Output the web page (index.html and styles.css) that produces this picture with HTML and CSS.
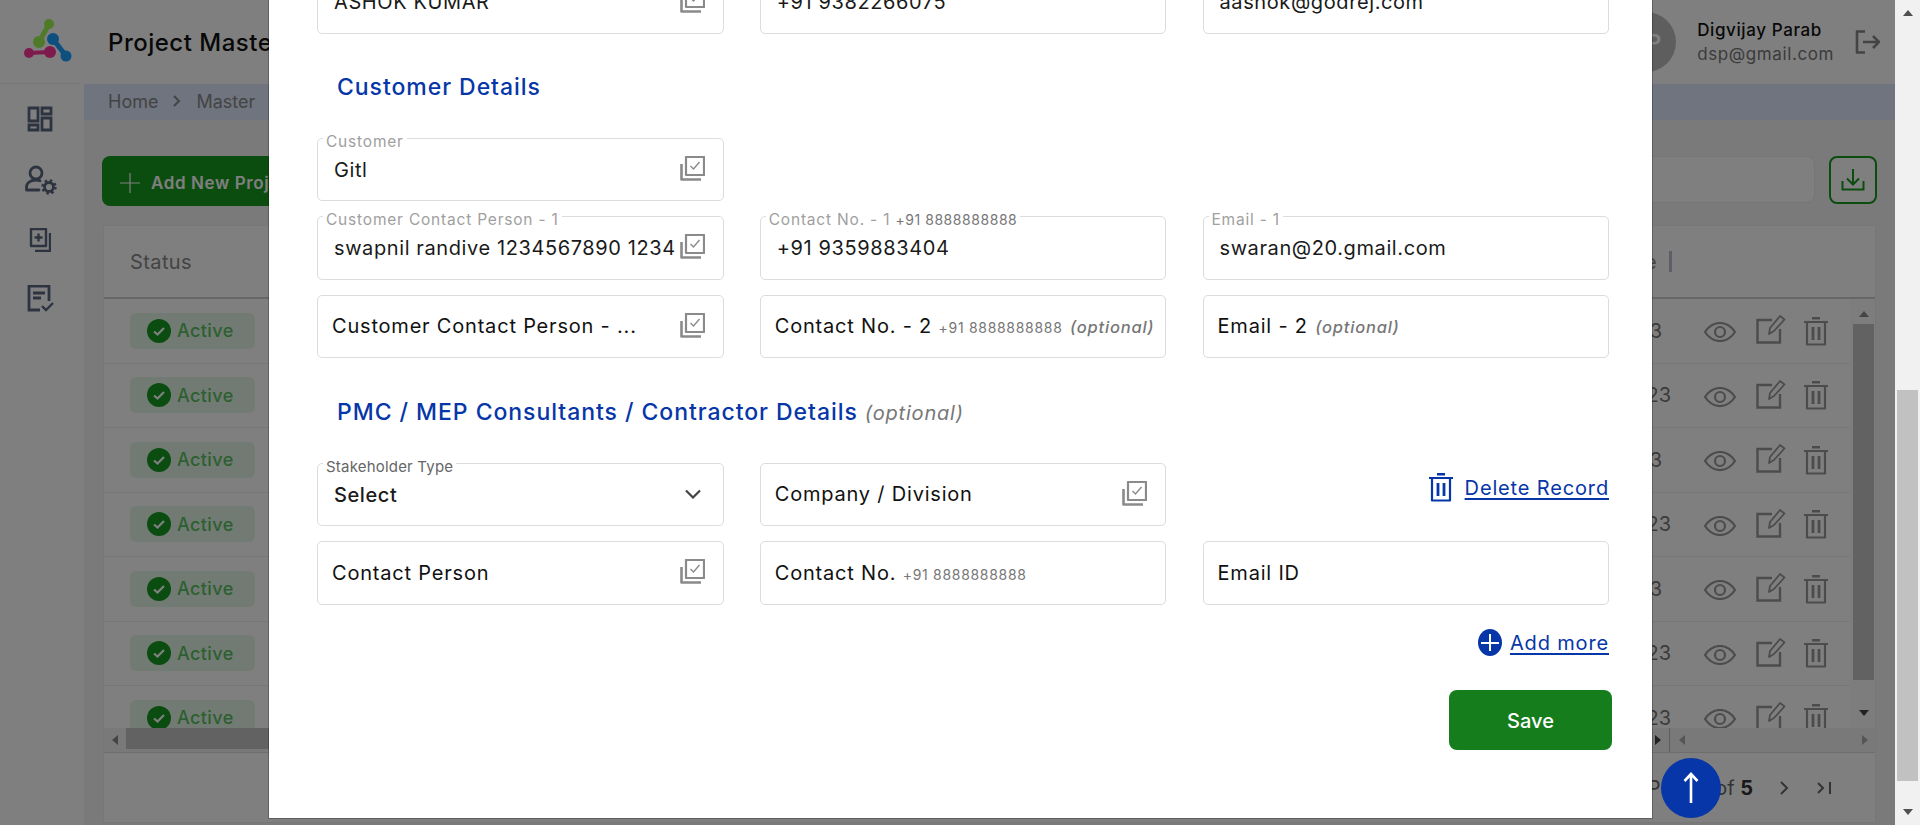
FILE: index.html
```html
<!DOCTYPE html>
<html lang="en">

<head>
  <meta charset="UTF-8">
  <meta name="viewport" content="width=device-width, initial-scale=1.0">
  <title>Project Master</title>
  <link rel="stylesheet" href="styles.css">
</head>

<body>
  <svg class="defs" width="0" height="0">
    <symbol id="i-copy" viewBox="0 0 25 25">
      <path d="M6 1h18v18H6z" fill="none" stroke="currentColor" stroke-width="2.200" stroke-linejoin="round" />
      <path d="M1.500 8v15.500H21" fill="none" stroke="currentColor" stroke-width="2.600" stroke-linejoin="round" />
      <path d="M10.500 10l3 3 6-7" fill="none" stroke="currentColor" stroke-width="1.400" />
    </symbol>
    <symbol id="i-eye" viewBox="0 0 32 20">
      <path d="M1 10C5 4 10 1 16 1s11 3 15 9c-4 6-9 9-15 9S5 16 1 10z" fill="none" stroke="currentColor" stroke-width="2.200" />
      <circle cx="16" cy="10" r="5" fill="none" stroke="currentColor" stroke-width="2.200" />
    </symbol>
    <symbol id="i-edit" viewBox="0 0 30 30">
      <path d="M16 6H1.500v22.500H24V15" fill="none" stroke="currentColor" stroke-width="2.400" />
      <path d="M13 20l1-6L24 2l4.500 3.500L18 17z" fill="none" stroke="currentColor" stroke-width="1.800" stroke-linejoin="round" />
    </symbol>
    <symbol id="i-trash" viewBox="0 0 24 30">
      <path d="M8 1h8v2.500H8zM0 5h24v2H0z" fill="currentColor" />
      <path d="M3 7v21.500h18V7" fill="none" stroke="currentColor" stroke-width="2.200" stroke-linejoin="round" />
      <path d="M9 11v13M15 11v13" fill="none" stroke="currentColor" stroke-width="2.800" />
    </symbol>
    <symbol id="i-check" viewBox="0 0 24 24">
      <circle cx="12" cy="12" r="12" fill="currentColor" />
      <path d="M7 12.500l3.500 3 6.500-6.500" fill="none" stroke="#fff" stroke-width="2.200" />
    </symbol>
  </svg>

  <div class="app">
    <aside class="sidebar">
      <div class="logo">
        <svg width="48" height="44" viewBox="0 0 48 44">
          <path d="M25 5L15 23" stroke="#9ef450" stroke-width="5" />
          <path d="M29 20l13 17" stroke="#1a9eff" stroke-width="5" />
          <path d="M5 34l21-1" stroke="#ff3499" stroke-width="4" />
          <circle cx="25" cy="5" r="5" fill="#9ef450" />
          <circle cx="15" cy="23" r="6" fill="#9ef450" />
          <circle cx="29" cy="20" r="6" fill="#1a9eff" />
          <circle cx="42" cy="37" r="5.500" fill="#1a9eff" />
          <circle cx="5" cy="34" r="5" fill="#ff3499" />
          <circle cx="26" cy="33" r="6" fill="#ff3499" />
        </svg>
      </div>
      <nav class="side-nav">
        <svg width="26" height="26" viewBox="0 0 26 26">
          <path d="M2 2h9v13H2zM15 2h9v6h-9zM2 19h9v5H2zM15 12h9v12h-9z" fill="none" stroke="currentColor" stroke-width="2.800" />
        </svg>
        <svg class="nav-user" width="32" height="30" viewBox="0 0 32 30">
          <circle cx="11" cy="8" r="6" fill="none" stroke="currentColor" stroke-width="2.800" />
          <path d="M1.500 25v-3c0-4 4-7 9.500-7 2 0 3 .3 4 .7M1.500 25H14" fill="none" stroke="currentColor" stroke-width="2.800" stroke-linecap="round" />
          <circle cx="24" cy="22" r="4.500" fill="none" stroke="currentColor" stroke-width="2.800" />
          <circle cx="24" cy="22" r="6.500" fill="none" stroke="currentColor" stroke-width="2.400" stroke-dasharray="2.500 2.600" />
        </svg>
        <svg width="22" height="24" viewBox="0 0 22 24">
          <path d="M2 1h15v17H2z" fill="none" stroke="currentColor" stroke-width="2.400" stroke-linejoin="round" />
          <path d="M21 5v18H6" fill="none" stroke="currentColor" stroke-width="2.400" />
          <path d="M9.500 5.500v8M5.500 9.500h8" stroke="currentColor" stroke-width="2.400" />
        </svg>
        <svg width="27" height="27" viewBox="0 0 27 27">
          <path d="M13 25H2V1h20v15" fill="none" stroke="currentColor" stroke-width="2.800" />
          <path d="M6 8h12M6 13h8" stroke="currentColor" stroke-width="2.800" />
          <path d="M15 21l4 4 7-7" fill="none" stroke="currentColor" stroke-width="2.400" />
        </svg>
      </nav>
    </aside>

    <main class="main">
      <header class="topbar">
        <h1>Project Master</h1>
        <div class="user">
          <div class="avatar">DP</div>
          <div class="user-text">
            <div class="user-name">Digvijay Parab</div>
            <div class="user-mail">dsp@gmail.com</div>
          </div>
          <svg width="25" height="24" viewBox="0 0 25 24">
            <path d="M10 1.500H2v21h8" fill="none" stroke="currentColor" stroke-width="2.600" stroke-linejoin="round" />
            <path d="M8 12h16M18 6l6 6-6 6" fill="none" stroke="currentColor" stroke-width="2.600" />
          </svg>
        </div>
      </header>
      <div class="crumbs">Home
        <svg width="10" height="12" viewBox="0 0 10 12">
          <path d="M2 1l5 5-5 5" fill="none" stroke="currentColor" stroke-width="2" />
        </svg>
        Master
      </div>

      <section class="content">
        <div class="toolbar">
          <button class="add-btn">
            <svg width="22" height="22" viewBox="0 0 22 22">
              <path d="M11 1v20M1 11h20" stroke="currentColor" stroke-width="1.200" />
            </svg>
            Add New Project
          </button>
          <div class="search"></div>
          <button class="export">
            <svg width="24" height="24" viewBox="0 0 24 24">
              <path d="M12 1v15M6 10.500l6 6 6-6" fill="none" stroke="currentColor" stroke-width="2" />
              <path d="M1.500 13v8.500h21V13" fill="none" stroke="currentColor" stroke-width="2" />
            </svg>
          </button>
        </div>

        <div class="table">
          <div class="table-head">
            <span>Status</span>
            <span class="last-col">Date<i class="col-sep"></i></span>
          </div>
          <div class="table-body">
            <div class="rows" id="rows"></div>
            <div class="vscroll">
              <i class="arr arr-up"></i>
              <div class="vscroll-thumb"></div>
              <i class="arr arr-down"></i>
            </div>
          </div>
          <div class="hscroll">
            <div class="hscroll-main">
              <i class="arr arr-left"></i>
              <div class="hscroll-thumb"></div>
              <i class="arr arr-right"></i>
            </div>
            <div class="hscroll-side">
              <i class="arr arr-left muted"></i>
              <i class="arr arr-right muted"></i>
            </div>
          </div>
          <div class="pager">
            <span>Page 1 of <b>5</b></span>
            <svg width="12" height="16" viewBox="0 0 12 16">
              <path d="M2 2l6 6-6 6" fill="none" stroke="currentColor" stroke-width="2" />
            </svg>
            <svg width="16" height="14" viewBox="0 0 16 14">
              <path d="M1 2l5 5-5 5M13 1v12" fill="none" stroke="currentColor" stroke-width="2" />
            </svg>
          </div>
        </div>
      </section>
    </main>

    <div class="overlay"></div>

    <div class="modal">
      <div class="grid first-row">
        <div class="field">
          <span class="value">ASHOK KUMAR</span>
          <svg class="copy"><use href="#i-copy" /></svg>
        </div>
        <div class="field"><span class="value">+91 9382266075</span></div>
        <div class="field"><span class="value">aashok@godrej.com</span></div>
      </div>

      <h2 class="sec-title">Customer Details</h2>

      <div class="grid">
        <div class="field">
          <label class="float">Customer</label>
          <span class="value">Gitl</span>
          <svg class="copy"><use href="#i-copy" /></svg>
        </div>
        <div></div>
        <div></div>
        <div class="field">
          <label class="float">Customer Contact Person - 1</label>
          <span class="value">swapnil randive 1234567890 1234</span>
          <svg class="copy"><use href="#i-copy" /></svg>
        </div>
        <div class="field">
          <label class="float">Contact No. - 1 <small class="hint-dark">+91 8888888888</small></label>
          <span class="value">+91 9359883404</span>
        </div>
        <div class="field">
          <label class="float">Email - 1</label>
          <span class="value">swaran@20.gmail.com</span>
        </div>
        <div class="field">
          <span class="holder">Customer Contact Person - ...</span>
          <svg class="copy"><use href="#i-copy" /></svg>
        </div>
        <div class="field">
          <span class="holder">Contact No. - 2 <small>+91 8888888888</small> <em>(optional)</em></span>
        </div>
        <div class="field">
          <span class="holder">Email - 2 <em>(optional)</em></span>
        </div>
      </div>

      <h2 class="sec-title sec-pmc">PMC / MEP Consultants / Contractor Details <em>(optional)</em></h2>

      <div class="grid">
        <div class="field">
          <label class="float float-dark">Stakeholder Type</label>
          <span class="value value-select">Select</span>
          <svg class="chevron" width="18" height="10" viewBox="0 0 18 10">
            <path d="M2 1.500l7 7 7-7" fill="none" stroke="currentColor" stroke-width="2.200" />
          </svg>
        </div>
        <div class="field">
          <span class="holder">Company / Division</span>
          <svg class="copy"><use href="#i-copy" /></svg>
        </div>
        <div class="delete-cell">
          <svg class="del-icon" width="24" height="30"><use href="#i-trash" /></svg>
          <a href="#" class="link">Delete Record</a>
        </div>
        <div class="field">
          <span class="holder">Contact Person</span>
          <svg class="copy"><use href="#i-copy" /></svg>
        </div>
        <div class="field">
          <span class="holder">Contact No. <small>+91 8888888888</small></span>
        </div>
        <div class="field">
          <span class="holder">Email ID</span>
        </div>
      </div>

      <div class="add-row">
        <span class="add-dot"></span>
        <a href="#" class="link">Add more</a>
      </div>
      <div class="save-row">
        <button class="save">Save</button>
      </div>
    </div>

    <button class="to-top">
      <svg width="16" height="32" viewBox="0 0 16 32">
        <path d="M8 31V2M1.500 9L8 2l6.500 7" fill="none" stroke="#fff" stroke-width="2.600" />
      </svg>
    </button>
  </div>

  <div class="page-scroll">
    <i class="arr arr-up"></i>
    <div class="page-scroll-track">
      <div class="page-scroll-thumb"></div>
    </div>
    <i class="arr arr-down"></i>
  </div>

  <script>
    const rows = document.getElementById('rows');
    const years = ['3', '23', '3', '23', '3', '23', '23'];

    years.forEach((y) => {
      const row = document.createElement('div');
      row.className = 'row';
      row.innerHTML = `
        <span class="badge"><svg width="24" height="24"><use href="#i-check" /></svg>Active</span>
        <span class="date ${y === '3' ? 'date-short' : ''}">${y}</span>
        <span class="actions">
          <svg class="a-eye"><use href="#i-eye" /></svg>
          <svg class="a-edit"><use href="#i-edit" /></svg>
          <svg class="a-trash"><use href="#i-trash" /></svg>
        </span>`;
      rows.appendChild(row);
    });
  </script>
</body>

</html>
```

FILE: styles.css
```css
* {
  box-sizing: border-box;
  margin: 0;
  padding: 0;
}
html, body {
  height: 825px;
  overflow: hidden;
}
body {
  display: flex;
  font-family: Inter, "Noto Sans", sans-serif;
  color: #111;
  background: #fff;
}
.defs {
  position: absolute;
}
.app {
  position: relative;
  flex: 1;
  display: flex;
  height: 825px;
  overflow: hidden;
}

/* page behind the modal */
.sidebar {
  width: 84px;
  flex: none;
  background: #fff;
  box-shadow: 1px 0 4px rgba(0, 0, 0, .06);
}
.logo {
  height: 84px;
  margin-right: 4px;
  padding: 19px 0 0 24px;
  border-bottom: 1px solid #f0f0f0;
}
.side-nav {
  display: flex;
  flex-direction: column;
  align-items: center;
  color: #5a6880;
  margin-right: 4px;
  padding-top: 22px;
  gap: 33px;
}
.nav-user {
  margin-left: 2px;
}
.main {
  flex: 1;
  min-width: 0;
  background: #f4f4f4;
}
.topbar {
  height: 84px;
  background: #fff;
  display: flex;
  align-items: center;
  justify-content: space-between;
  padding: 0 15px 0 24px;
}
.topbar h1 {
  font-size: 24px;
  font-weight: 500;
  letter-spacing: .5px;
}
.user {
  display: flex;
  align-items: center;
  color: #888;
}
.avatar {
  width: 60px;
  height: 60px;
  border-radius: 50%;
  background: #bdbdbd;
  color: #fff;
  font-size: 22px;
  font-weight: 600;
  text-align: center;
  line-height: 60px;
  margin-right: 21px;
}
.user-text {
  margin-right: 21px;
}
.user-name {
  font-size: 17px;
  font-weight: 500;
  color: #111;
  line-height: 24px;
  letter-spacing: .6px;
}
.user-mail {
  font-size: 17px;
  line-height: 24px;
  color: #777;
  letter-spacing: .6px;
}
.crumbs {
  height: 36px;
  background: #dfe8ff;
  display: flex;
  align-items: center;
  gap: 14px;
  padding: 0 0 2px 24px;
  font-size: 18px;
  color: #888;
}
.content {
  padding: 36px 19px 0;
}
.toolbar {
  height: 50px;
  display: flex;
  justify-content: space-between;
  align-items: flex-start;
  gap: 14px;
}
.add-btn {
  width: 260px;
  height: 50px;
  margin-left: -1px;
  background: #16991f;
  border: 0;
  border-radius: 8px;
  color: #fff;
  font: 600 17px Inter, sans-serif;
  letter-spacing: .6px;
  padding: 3px 0 0 17px;
  white-space: nowrap;
  display: flex;
  align-items: center;
  gap: 10px;
}
.search {
  margin-left: auto;
  width: 500px;
  height: 47px;
  border: 1px solid #ececec;
  border-radius: 8px;
  background: #fff;
}
.export {
  width: 48px;
  height: 48px;
  margin-right: -1px;
  background: #fff;
  border: 2px solid #16991f;
  border-radius: 8px;
  color: #16991f;
  padding-top: 3px;
}
.table {
  margin-top: 19px;
  height: 598px;
  background: #fff;
  border: 1px solid #eee;
}
.table-head {
  height: 73px;
  display: flex;
  align-items: center;
  justify-content: space-between;
  padding: 0 203px 0 26px;
  font-size: 20px;
  letter-spacing: .4px;
  color: #888;
  border-bottom: 2px solid #cfcfcf;
}
.col-sep {
  display: inline-block;
  width: 3px;
  height: 21px;
  margin-left: 12px;
  vertical-align: -3px;
  background: #b9c0cc;
}
.table-body {
  height: 429px;
  display: flex;
}
.rows {
  flex: 1;
  overflow: hidden;
}
.row {
  height: 64.500px;
  display: flex;
  align-items: center;
  padding: 0 22px 0 26px;
  border-bottom: 1px solid #efefef;
}
.badge {
  width: 125px;
  height: 36px;
  background: #e4f7e6;
  border-radius: 6px;
  display: flex;
  align-items: center;
  gap: 6px;
  padding-left: 17px;
  font-size: 18px;
  letter-spacing: .4px;
  font-weight: 500;
  color: #58c062;
}
.badge svg {
  color: #169a20;
}
.date {
  margin-left: auto;
  width: 40px;
  font-size: 20px;
  color: #777;
  text-align: right;
}
.date-short {
  padding-right: 9px;
}
.actions {
  display: flex;
  align-items: center;
  margin-left: 33px;
  color: #999;
}
.a-eye {
  width: 32px;
  height: 20px;
  margin-right: 20px;
  margin-top: 3px;
}
.a-edit {
  width: 30px;
  height: 30px;
  margin-right: 18px;
  margin-top: -3px;
}
.a-trash {
  width: 24px;
  height: 30px;
}
.vscroll {
  width: 25px;
  flex: none;
  background: #fafafa;
  padding: 0 0 0 2px;
  display: flex;
  flex-direction: column;
  align-items: center;
}
.vscroll-thumb {
  width: 21px;
  height: 356px;
  margin-top: 7px;
  background: #c4c4c4;
}
.vscroll .arr-up {
  margin-top: 12px;
}
.vscroll .arr-down {
  margin-top: 30px;
}
.hscroll {
  height: 25px;
  display: flex;
  background: #f3f3f3;
  border-bottom: 1px solid #ddd;
}
.hscroll-main {
  flex: 1;
  display: flex;
  align-items: center;
  padding: 0 8px;
  border-right: 1px solid #bbb;
}
.hscroll-thumb {
  flex: 1;
  height: 21px;
  align-self: flex-start;
  margin: 0 300px 0 8px;
  background: #c4c4c4;
}
.hscroll-main .arr-right {
  margin-left: auto;
}
.hscroll-side {
  width: 205px;
  display: flex;
  justify-content: space-between;
  align-items: center;
  padding: 0 7px 0 9px;
}
.pager {
  height: 70px;
  display: flex;
  align-items: center;
  justify-content: flex-end;
  padding-right: 42px;
  gap: 26px;
  font-size: 20px;
  color: #666;
}
.pager b {
  color: #333;
}

/* little triangles of the scrollbars */
.arr {
  display: block;
  width: 0;
  height: 0;
  flex: none;
  border: 5.500px solid transparent;
}
.arr-up {
  border-top: 0;
  border-bottom: 6px solid #888;
}
.arr-down {
  border-bottom: 0;
  border-top: 6px solid #444;
}
.arr-left {
  border-left: 0;
  border-right: 6px solid #888;
}
.arr-right {
  border-right: 0;
  border-left: 6px solid #444;
}
.muted.arr-left {
  border-right-color: #aaa;
}
.muted.arr-right {
  border-left-color: #aaa;
}

.overlay {
  position: absolute;
  inset: 0;
  background: rgba(0, 0, 0, .5);
}

/* modal, scrolled part way down */
.modal {
  position: absolute;
  left: 269px;
  top: 0;
  width: 1383px;
  height: 818px;
  overflow: hidden;
  background: #fff;
  box-shadow: 0 0 0 1px rgba(0, 0, 0, .25);
  padding: 0 43px 0 48px;
}
.grid {
  display: grid;
  grid-template-columns: repeat(3, minmax(0, 1fr));
  grid-auto-rows: 63.500px;
  gap: 15px 36.250px;
}
.first-row {
  margin-top: -30px;
}
.sec-title {
  font-size: 23px;
  font-weight: 500;
  line-height: 26px;
  color: #0636a8;
  margin: 40px 0 38px 20px;
  letter-spacing: .95px;
}
.sec-pmc {
  margin: 41px 0 36.500px 20px;
}
.sec-title em {
  font-size: 20px;
  font-weight: 400;
  color: #777;
  letter-spacing: .8px;
}
.field {
  position: relative;
  display: flex;
  align-items: center;
  padding: 0 14px 0 15px;
  border: 1px solid #dcdcdc;
  border-radius: 5px;
  font-size: 20px;
}
.value {
  padding-left: 1px;
  margin-top: 1px;
  color: #1a1a1a;
  white-space: nowrap;
  letter-spacing: .6px;
}
.value-select {
  font-weight: 500;
}
.holder {
  margin-left: -1px;
  color: #111;
  white-space: nowrap;
  letter-spacing: .8px;
}
.holder small {
  font-size: 14px;
  color: #777;
  letter-spacing: .7px;
}
.holder em {
  margin-left: 1px;
  font-size: 16.500px;
  font-weight: 500;
  color: #777;
  letter-spacing: .8px;
}
.float {
  position: absolute;
  left: 5px;
  top: -6px;
  padding: 0 3px;
  background: #fff;
  font-size: 15.500px;
  line-height: 18px;
  color: #a0a0a0;
  white-space: nowrap;
  letter-spacing: .8px;
}
.hint-dark {
  font-size: 14px;
  color: #777;
  letter-spacing: .55px;
}
.float-dark {
  color: #666;
  font-size: 15px;
  letter-spacing: .2px;
}
.copy {
  width: 25px;
  height: 25px;
  margin-left: auto;
  margin-right: 4px;
  margin-top: -2px;
  flex: none;
  color: #8a8a8a;
}
.chevron {
  margin-left: auto;
  margin-right: 7px;
  color: #444;
}
.delete-cell {
  display: flex;
  justify-content: flex-end;
  align-items: flex-start;
  padding-top: 9px;
  color: #0636a8;
}
.del-icon {
  margin-right: 12px;
}
.link {
  color: #0636a8;
  font-size: 20px;
  letter-spacing: .85px;
  text-underline-offset: 3px;
}
.delete-cell .link {
  margin-top: 4px;
}
.add-row {
  margin-top: 24px;
  height: 28px;
  display: flex;
  justify-content: flex-end;
  align-items: center;
}
.add-dot {
  position: relative;
  width: 24px;
  height: 27px;
  margin-right: 8px;
  border-radius: 50%;
  background: #0636a8;
}
.add-dot::before,
.add-dot::after {
  content: "";
  position: absolute;
  background: #fff;
}
.add-dot::before {
  left: 3px;
  right: 3px;
  top: 13px;
  height: 1.500px;
}
.add-dot::after {
  top: 5px;
  bottom: 5px;
  left: 11.500px;
  width: 1.500px;
}
.save-row {
  display: flex;
  justify-content: flex-end;
  margin: 33px -3px 0 0;
}
.save {
  width: 163px;
  height: 60px;
  padding-top: 2px;
  background: #157d1c;
  color: #fff;
  border: 0;
  border-radius: 8px;
  font: 500 20px Inter, sans-serif;
}
.to-top {
  position: absolute;
  left: 1661px;
  top: 758px;
  width: 60px;
  height: 60px;
  background: #0636a8;
  border: 0;
  border-radius: 50%;
  display: flex;
  align-items: center;
  justify-content: center;
}

/* browser scrollbar */
.page-scroll {
  width: 25px;
  flex: none;
  height: 825px;
  background: #f1f1f1;
  display: flex;
  flex-direction: column;
  align-items: center;
  padding: 10px 0;
}
.page-scroll-track {
  flex: 1;
  width: 21px;
  padding-top: 374px;
  padding-bottom: 28px;
  display: flex;
}
.page-scroll-thumb {
  flex: 1;
  background: #c1c1c1;
}
.page-scroll .arr-up {
  border-bottom-color: #505050;
}
.page-scroll .arr-down {
  border-top-color: #505050;
}
```
